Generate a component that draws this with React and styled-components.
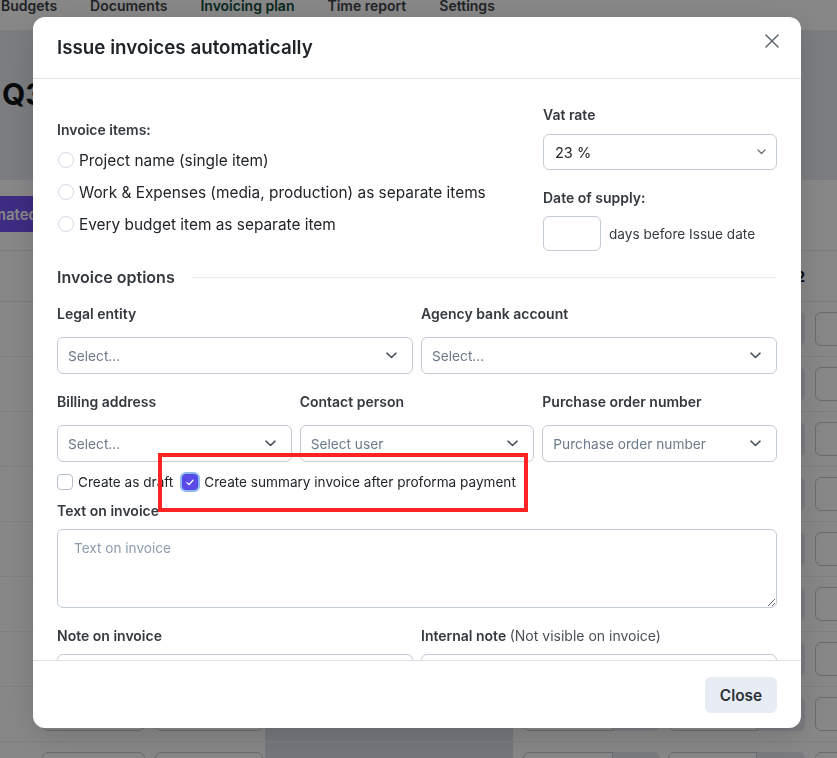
import React from "react";
import styled, { createGlobalStyle } from "styled-components";

const GlobalStyle = createGlobalStyle`
  html, body {
    margin: 0;
    padding: 0;
  }
  body {
    font-family: Inter, "Noto Sans", Arial, sans-serif;
    color: #212529;
    overflow: hidden;
  }
  * {
    box-sizing: border-box;
  }
`;

const navItems = ["Budgets", "Documents", "Invoicing plan", "Time report", "Settings"];
const rows = [0, 1, 2, 3, 4, 5, 6, 7, 8];

function Chevron({ small }) {
  return small ? (
    <svg width="9" height="6" viewBox="0 0 9 6" fill="none">
      <path d="M1 1l3.5 3.5L8 1" stroke="#6c757d" strokeWidth="1.4" strokeLinecap="round" strokeLinejoin="round" />
    </svg>
  ) : (
    <svg width="11" height="7" viewBox="0 0 11 7" fill="none">
      <path d="M1 1.2l4.5 4.3L10 1.2" stroke="#4a5560" strokeWidth="1.6" strokeLinecap="round" strokeLinejoin="round" />
    </svg>
  );
}

function App() {
  return (
    <>
      <GlobalStyle />
      <Page>
        <NavBar>
          {navItems.map((item) => (
            <NavItem key={item} $active={item === "Invoicing plan"}>
              {item}
            </NavItem>
          ))}
        </NavBar>
        <PageHeader>
          <PageTitle>Q3 2024</PageTitle>
        </PageHeader>
        <Toolbar>
          <PrimaryButton>Automated invoicing</PrimaryButton>
        </Toolbar>
        <TableHead>
          <span />
          <BlueCell />
          <span />
          <HeadText>Q2</HeadText>
          <span />
        </TableHead>
        {rows.map((r) => (
          <TableRow key={r}>
            <LeftCell>
              <CellBox $w={103} />
              <CellBox $w={108} />
            </LeftCell>
            <BlueCell />
            <GroupCell>
              <CellBox $w={90} $joined />
              <Addon $w={47} />
            </GroupCell>
            <GroupCell $pad={8}>
              <CellBox $w={89} $joined />
              <Addon $w={48} />
            </GroupCell>
            <GroupCell>
              <CellBox $w={100} />
            </GroupCell>
          </TableRow>
        ))}
      </Page>

      <Overlay>
        <Modal>
          <ModalHeader>
            <ModalTitle>Issue invoices automatically</ModalTitle>
            <CloseIcon aria-label="Close">
              <svg width="14" height="14" viewBox="0 0 14 14" fill="none">
                <path d="M1 1l12 12M13 1L1 13" stroke="#5f6770" strokeWidth="1.5" strokeLinecap="round" />
              </svg>
            </CloseIcon>
          </ModalHeader>

          <ModalBody>
            <TopRow>
              <ItemsColumn>
                <Label $mb={4}>Invoice items:</Label>
                <RadioRow>
                  <Radio />
                  Project name (single item)
                </RadioRow>
                <RadioRow>
                  <Radio />
                  Work &amp; Expenses (media, production) as separate items
                </RadioRow>
                <RadioRow>
                  <Radio />
                  Every budget item as separate item
                </RadioRow>
              </ItemsColumn>
              <div>
                <Label $mb={9}>Vat rate</Label>
                <Select $h={36} $pl={11}>
                  <SelectValue>23 %</SelectValue>
                  <Chevron small />
                </Select>
                <Label $mt={18} $mb={8}>
                  Date of supply:
                </Label>
                <InlineRow>
                  <SmallInput />
                  <HelpText>days before Issue date</HelpText>
                </InlineRow>
              </div>
            </TopRow>

            <SectionTitle>Invoice options</SectionTitle>

            <Grid $cols={2} $mt={15}>
              <div>
                <Label $mb={13}>Legal entity</Label>
                <Select>
                  <Placeholder>Select...</Placeholder>
                  <Chevron />
                </Select>
              </div>
              <div>
                <Label $mb={13}>Agency bank account</Label>
                <Select>
                  <Placeholder>Select...</Placeholder>
                  <Chevron />
                </Select>
              </div>
            </Grid>

            <Grid $cols={3} $mt={18}>
              <div>
                <Label $mb={13}>Billing address</Label>
                <Select>
                  <Placeholder>Select...</Placeholder>
                  <Chevron />
                </Select>
              </div>
              <div>
                <Label $mb={13}>Contact person</Label>
                <Select>
                  <Placeholder>Select user</Placeholder>
                  <Chevron />
                </Select>
              </div>
              <div>
                <Label $mb={13}>Purchase order number</Label>
                <Select>
                  <Placeholder>Purchase order number</Placeholder>
                  <Chevron />
                </Select>
              </div>
            </Grid>

            <CheckRow>
              <Check />
              <CheckText>Create as draft</CheckText>
              <Check $checked>
                <svg width="8" height="7" viewBox="0 0 8 7" fill="none">
                  <path d="M1 3.6l2 2L7 1.2" stroke="#fff" strokeWidth="1.3" strokeLinecap="round" strokeLinejoin="round" />
                </svg>
              </Check>
              <CheckText>Create summary invoice after proforma payment</CheckText>
              <Highlight />
            </CheckRow>

            <Label $mt={9} $mb={8}>
              Text on invoice
            </Label>
            <TextArea placeholder="Text on invoice" />

            <Grid $cols={2} $mt={18}>
              <div>
                <Label $mb={8}>Note on invoice</Label>
                <Select $h={38} />
              </div>
              <div>
                <Label $mb={8}>
                  Internal note <Muted>(Not visible on invoice)</Muted>
                </Label>
                <Select $h={38} />
              </div>
            </Grid>
          </ModalBody>

          <ModalFooter>
            <SecondaryButton>Close</SecondaryButton>
          </ModalFooter>
        </Modal>
      </Overlay>
    </>
  );
}

/* ---------- background page ---------- */

const Page = styled.div`
  width: 100%;
  height: 100vh;
  overflow: hidden;
  background: #ffffff;
`;

const NavBar = styled.nav`
  display: flex;
  gap: 33px;
  height: 30px;
  padding-left: 1px;
  background: #ffffff;
`;

const NavItem = styled.span`
  margin-top: -1px;
  font-size: 14px;
  font-weight: 600;
  line-height: 14px;
  color: ${(p) => (p.$active ? "#0d4a3b" : "#3b4148")};
`;

const PageHeader = styled.div`
  height: 150px;
  padding: 46px 0 0 2px;
  background: #eaecf1;
`;

const PageTitle = styled.h1`
  margin: 0;
  font-size: 30px;
  line-height: 36px;
  font-weight: 700;
  color: #111418;
`;

const Toolbar = styled.div`
  height: 70px;
  padding-top: 16px;
`;

const PrimaryButton = styled.button`
  height: 36px;
  margin-left: -54px;
  padding: 0 12px;
  border: 0;
  border-radius: 6px;
  background: #7453f6;
  color: #ffffff;
  font-family: inherit;
  font-size: 15px;
  font-weight: 600;
`;

const tableCols = "265px 248px 147px 145px 1fr";

const TableHead = styled.div`
  display: grid;
  grid-template-columns: ${tableCols};
  height: 52px;
  border-top: 1px solid #e4e7eb;
  border-bottom: 1px solid #e4e7eb;
`;

const HeadText = styled.span`
  align-self: center;
  text-align: right;
  font-size: 14px;
  font-weight: 700;
  color: #111418;
`;

const TableRow = styled.div`
  display: grid;
  grid-template-columns: ${tableCols};
  height: 55px;
  border-bottom: 1px solid #eef0f3;
`;

const BlueCell = styled.div`
  background: #dbe0e8;
`;

const LeftCell = styled.div`
  display: flex;
  align-items: center;
  gap: 10px;
  padding-left: 42px;
`;

const GroupCell = styled.div`
  display: flex;
  align-items: center;
  padding-left: ${(p) => p.$pad ?? 10}px;
`;

const CellBox = styled.div`
  width: ${(p) => p.$w}px;
  height: 34px;
  border: 1px solid #c5cbd2;
  border-radius: ${(p) => (p.$joined ? "6px 0 0 6px" : "6px")};
  background: #ffffff;
`;

const Addon = styled.div`
  width: ${(p) => p.$w}px;
  height: 34px;
  border-radius: 0 6px 6px 0;
  background: #e6e9ef;
`;

/* ---------- modal ---------- */

const Overlay = styled.div`
  position: fixed;
  inset: 0;
  display: flex;
  justify-content: center;
  align-items: flex-start;
  padding-top: 17px;
  padding-right: 3px;
  background: rgba(0, 0, 0, 0.47);
`;

const Modal = styled.div`
  display: flex;
  flex-direction: column;
  width: 768px;
  height: 711px;
  background: #ffffff;
  border-radius: 12px;
  overflow: hidden;
  box-shadow: 0 8px 30px rgba(0, 0, 0, 0.15);
`;

const ModalHeader = styled.div`
  display: flex;
  align-items: center;
  justify-content: space-between;
  height: 62px;
  flex-shrink: 0;
  padding: 0 22px 0 24px;
  border-bottom: 1px solid #dfe3e8;
`;

const ModalTitle = styled.h2`
  margin: 0;
  font-size: 18.8px;
  font-weight: 600;
  color: #1f2429;
`;

const CloseIcon = styled.button`
  display: flex;
  padding: 0;
  margin-top: -14px;
  border: 0;
  background: none;
`;

const ModalBody = styled.div`
  flex: 1;
  overflow: hidden;
  padding: 26px 24px 0;
`;

const TopRow = styled.div`
  display: grid;
  grid-template-columns: 1fr 234px;
  align-items: start;
`;

const ItemsColumn = styled.div`
  padding-top: 15px;
`;

const Label = styled.div`
  margin-top: ${(p) => p.$mt ?? 0}px;
  margin-bottom: ${(p) => p.$mb ?? 8}px;
  font-size: 14px;
  font-weight: 600;
  line-height: 20px;
  color: #343a40;
`;

const Muted = styled.span`
  font-weight: 400;
  color: #495057;
`;

const RadioRow = styled.div`
  display: flex;
  align-items: center;
  gap: 5px;
  height: 32px;
  font-size: 15.4px;
  color: #212529;
`;

const Radio = styled.span`
  width: 16px;
  height: 16px;
  margin-left: 1px;
  border: 1px solid #d3dae3;
  border-radius: 50%;
  background: #ffffff;
`;

const Select = styled.div`
  display: flex;
  align-items: center;
  justify-content: space-between;
  height: ${(p) => p.$h ?? 37}px;
  padding: 0 ${(p) => (p.$pl ? 10 : 15)}px 0 ${(p) => p.$pl ?? 10}px;
  border: 1px solid #c3cbd4;
  border-radius: 6px;
  background: #ffffff;
`;

const SelectValue = styled.span`
  font-size: 14.5px;
  color: #212529;
`;

const Placeholder = styled.span`
  font-size: 13.7px;
  color: #6c7a8b;
`;

const InlineRow = styled.div`
  display: flex;
  align-items: center;
  gap: 8px;
`;

const SmallInput = styled.div`
  width: 58px;
  height: 35px;
  border: 1px solid #c3cbd4;
  border-radius: 6px;
`;

const HelpText = styled.span`
  font-size: 13.6px;
  color: #343a40;
`;

const SectionTitle = styled.div`
  display: flex;
  align-items: center;
  margin-top: 14px;
  height: 24px;
  font-size: 16px;
  font-weight: 600;
  color: #343a40;

  &::after {
    content: "";
    flex: 1;
    height: 1px;
    margin-left: 16px;
    background: #e7eaee;
  }
`;

const Grid = styled.div`
  display: grid;
  grid-template-columns: repeat(${(p) => p.$cols}, 1fr);
  column-gap: 8px;
  margin-top: ${(p) => p.$mt ?? 0}px;
`;

const CheckRow = styled.div`
  position: relative;
  display: flex;
  align-items: center;
  height: 20px;
  margin-top: 10px;
`;

const Check = styled.span`
  display: flex;
  align-items: center;
  justify-content: center;
  flex-shrink: 0;
  width: 16px;
  height: 16px;
  margin-left: ${(p) => (p.$checked ? 9 : 0)}px;
  margin-right: ${(p) => (p.$checked ? 1 : 0)}px;
  border-radius: 4px;
  border: ${(p) => (p.$checked ? "1px solid #5446e2" : "1.5px solid #b8c1cb")};
  background: ${(p) => (p.$checked ? "#5a4be8" : "#ffffff")};
  box-shadow: ${(p) => (p.$checked ? "0 0 0 2px #8fb7ee" : "none")};
`;

const CheckText = styled.span`
  margin-left: 5px;
  font-size: 13.6px;
  color: #212529;
`;

const Highlight = styled.div`
  position: absolute;
  left: 101px;
  top: -19px;
  width: 370px;
  height: 59px;
  border: 4px solid #ff2424;
  pointer-events: none;
`;

const TextArea = styled.textarea`
  display: block;
  width: 100%;
  height: 79px;
  padding: 8px 16px;
  border: 1px solid #c3cbd4;
  border-radius: 6px;
  font-family: inherit;
  font-size: 13.6px;
  line-height: 20px;
  resize: vertical;
  outline: none;

  &::placeholder {
    color: #8d9bae;
  }
`;

const ModalFooter = styled.div`
  display: flex;
  align-items: center;
  justify-content: flex-end;
  height: 68px;
  flex-shrink: 0;
  padding: 1px 24px 0;
  border-top: 1px solid #dfe3e8;
`;

const SecondaryButton = styled.button`
  width: 72px;
  height: 36px;
  border: 0;
  border-radius: 6px;
  background: #e8edf5;
  color: #2b3035;
  font-family: inherit;
  font-size: 15.4px;
  font-weight: 600;
`;

export default App;
